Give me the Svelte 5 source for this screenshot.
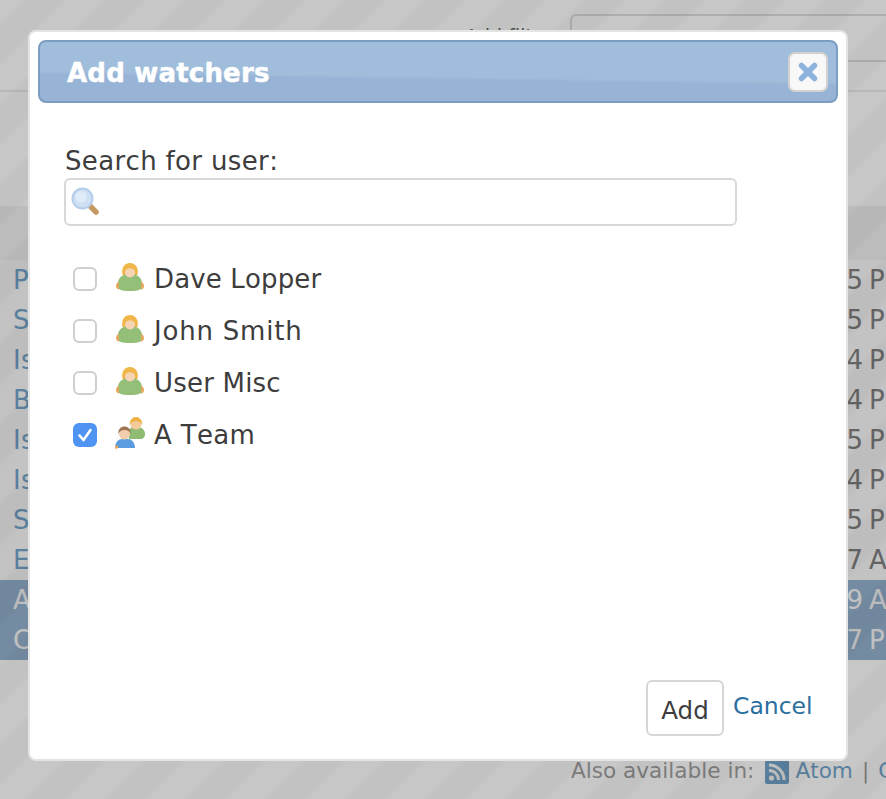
<script>
  const rows = [
    { name: 'Patch', time: '12:45 PM' },
    { name: 'Support', time: '12:45 PM' },
    { name: 'Issue', time: '12:44 PM' },
    { name: 'Bug', time: '12:44 PM' },
    { name: 'Issue', time: '12:45 PM' },
    { name: 'Issue', time: '12:44 PM' },
    { name: 'Support', time: '12:45 PM' },
    { name: 'Error', time: '10:47 AM' },
    { name: 'Attach', time: '10:49 AM', on: true },
    { name: 'Check', time: '12:47 PM', on: true }
  ];
  const users = [
    { name: 'Dave Lopper', group: false, checked: false, ls: 0.15 },
    { name: 'John Smith', group: false, checked: false, ls: 0.8 },
    { name: 'User Misc', group: false, checked: false, ls: 0.2 },
    { name: 'A Team', group: true, checked: true, ls: 0.35 }
  ];
</script>

<div class="page">
  <header class="top">
    <span class="filter-label">Add filter</span>
    <span class="filter-box"></span>
  </header>
  <section class="options"></section>
  <section class="table">
    {#each rows as r}
      <div class="row" class:on={r.on}>
        <span class="subject">{r.name}</span>
        <span class="time">{r.time}</span>
      </div>
    {/each}
  </section>
  <footer class="foot">
    <span>Also available in:</span>
    <svg class="rss" viewBox="0 0 24 24" width="24" height="24">
      <rect width="24" height="24" rx="2" fill="#6f9fc4" />
      <circle cx="6.500" cy="18" r="2.600" fill="#f0f0f0" />
      <path d="M4 10.500a9.500 9.500 0 0 1 9.500 9.500M4 5a15 15 0 0 1 15 15" fill="none" stroke="#f0f0f0" stroke-width="3" />
    </svg>
    <span class="lnk">Atom</span>
    <span>|</span>
    <span class="lnk">CSV</span>
  </footer>
</div>

<div class="shade"></div>

<div class="modal" role="dialog">
  <div class="title">
    <span class="title-text">Add watchers</span>
    <button class="close" aria-label="Close">
      <svg viewBox="0 0 20 20" width="20" height="20">
        <path d="M3.500 3.500 16.500 16.500M16.500 3.500 3.500 16.500" stroke="#8db2dc" stroke-width="5.500" stroke-linecap="round" />
      </svg>
    </button>
  </div>

  <div class="body">
    <label class="search-label" for="q">Search for user:</label>
    <div class="search">
      <svg class="glass" viewBox="0 0 28 28" width="28" height="28">
        <path d="M18 18 25 25" stroke="#c49a62" stroke-width="5.500" stroke-linecap="round" />
        <circle cx="11.500" cy="11.500" r="10" fill="#cfe0f4" stroke="#b4cdea" stroke-width="2" />
        <circle cx="10" cy="10" r="5.500" fill="#e0ebf8" />
      </svg>
      <input id="q" type="text" />
    </div>

    <ul class="users">
      {#each users as u}
        <li>
          <span class="check" class:checked={u.checked}>
            {#if u.checked}
              <svg viewBox="0 0 24 24" width="24" height="24">
                <path d="M6.500 12.500 10.500 17 17.500 7" fill="none" stroke="#fff" stroke-width="2.600" stroke-linecap="round" stroke-linejoin="round" />
              </svg>
            {/if}
          </span>
          {#if u.group}
            <svg class="ico team" viewBox="0 0 32 32" width="32" height="32">
              <path d="M13 15c1-4 4-5 6-5h4c3 0 6 2 7 6 .5 3-1 5-3 6H14Z" fill="#8fbb72" />
              <circle cx="21" cy="7" r="5.500" fill="#f3cb9a" />
              <path d="M15 8c-1-5 3-8 6-8s7 3 6 8c-1-3-3-4-6-4s-5 1-6 4Z" fill="#eeb040" />
              <path d="M0 31c0-6 4-9 7-9h6c3 0 7 3 7 9Z" fill="#5b9be0" />
              <circle cx="1.500" cy="30" r="1.800" fill="#e3a75f" />
              <circle cx="9.500" cy="17" r="5.500" fill="#f1cfae" />
              <path d="M3.500 17c-1-5 3-7.500 6-7.500s7 2.500 6 7.500c-1-3-3-4-6-4s-5 1-6 4Z" fill="#a07450" />
            </svg>
          {:else}
            <svg class="ico" viewBox="0 0 32 32" width="32" height="32">
              <path d="M7.500 13C6 5 10 1 15 1s9 4 7.500 12Z" fill="#f0b648" />
              <path d="M3 20c1-5 5-7 8-8h8c3 1 7 3 8 8 1 3 1 6-1 7-3 2-7 2-11 2s-8 0-11-2c-2-1-2-4-1-7Z" fill="#94bf78" />
              <path d="M4 27.500C0 27 0 21 4 20ZM26 27.500c4-.5 4-6.500 0-7.500Z" fill="#e3a75f" />
              <circle cx="15" cy="10.500" r="5" fill="#f5d5b5" />
              <path d="M9.500 9.500c1.500-2.500 3-3 5.500-3s4 .5 5.500 3C20.500 5 18 3 15 3S9.500 5 9.500 9.500Z" fill="#f0b648" />
            </svg>
          {/if}
          <span class="uname" style="letter-spacing: {u.ls}px">{u.name}</span>
        </li>
      {/each}
    </ul>
  </div>

  <div class="actions">
    <button class="add">Add</button>
    <span class="cancel">Cancel</span>
  </div>
</div>

<style>
  :global(body) {
    margin: 0;
    background: #fff;
    font-family: "DejaVu Sans", Verdana, sans-serif;
    font-kerning: none;
  }
  .page {
    width: 886px;
    height: 799px;
    overflow: hidden;
    font-size: 26px;
    color: #7c7c7c;
    background: #f8f8f8;
    display: flex;
    flex-direction: column;
  }
  .top {
    height: 92px;
    box-sizing: border-box;
    border-bottom: 2px solid #e4e4e4;
    padding: 14px 0 0 465px;
    display: flex;
    gap: 30px;
    flex-shrink: 0;
  }
  .filter-label {
    font-size: 19px;
    line-height: 36px;
    padding-top: 4px;
    width: 75px;
    white-space: nowrap;
    color: #666;
  }
  .filter-box {
    flex: 1;
    height: 48px;
    box-sizing: border-box;
    border: 2px solid #d8d8d8;
    border-right: 0;
    border-radius: 6px 0 0 6px;
  }
  .options {
    height: 114px;
    flex-shrink: 0;
  }
  .table {
    flex-shrink: 0;
    background: #eaeaea;
    padding-top: 54px;
    height: 454px;
    box-sizing: border-box;
  }
  .row {
    height: 40px;
    line-height: 40px;
    display: grid;
    grid-template-columns: 774px auto;
    padding-left: 13px;
    white-space: nowrap;
    overflow: hidden;
    background: #f2f2f2;
    letter-spacing: 0.3px;
    word-spacing: -3px;
  }
  .row.on {
    background: #90adc9;
    color: #f0f0f0;
  }
  .subject {
    color: #6f9fc4;
  }
  .row.on .subject {
    color: #f0f0f0;
  }
  .foot {
    flex: 1;
    background: #f8f8f8;
    padding: 98px 0 0 571px;
    display: flex;
    align-items: flex-start;
    gap: 9px;
    font-size: 21.600px;
    white-space: nowrap;
    color: #9a9a9a;
  }
  .lnk {
    color: #6f9fc4;
  }
  .rss {
    flex-shrink: 0;
    margin-top: 2px;
    margin-left: 2px;
    margin-right: -3px;
  }
  .shade {
    position: absolute;
    inset: 0 auto auto 0;
    width: 886px;
    height: 799px;
    background:
      repeating-linear-gradient(-45deg,
        rgba(0, 0, 0, 0.195) 0 11px,
        rgba(0, 0, 0, 0.22) 17px 40px,
        rgba(0, 0, 0, 0.195) 46px 56.570px);
  }
  .modal {
    position: absolute;
    left: 28px;
    top: 30px;
    width: 820px;
    height: 731px;
    box-sizing: border-box;
    background: #fff;
    border: 2px solid #e4e4e4;
    border-radius: 8px;
    padding: 8px;
    color: #3d3d3d;
    font-size: 26px;
    display: flex;
    flex-direction: column;
  }
  .title {
    height: 63px;
    box-sizing: border-box;
    flex-shrink: 0;
    border: 2px solid #7b9dc1;
    border-radius: 8px;
    background: linear-gradient(180.8deg, #a0bedb 0 57%, #97b3d6 62% 100%);
    color: #fff;
    padding-left: 27px;
    display: flex;
    align-items: center;
    justify-content: space-between;
  }
  .title-text {
    font-weight: 700;
    font-size: 26px;
    letter-spacing: 0.2px;
    -webkit-text-stroke: 0.5px #fff;
    padding-top: 2px;
  }
  .close {
    width: 40px;
    height: 40px;
    margin-right: 8px;
    padding: 0;
    box-sizing: border-box;
    background: #f8f8f8;
    border: 2px solid #d2d2d2;
    border-radius: 7px;
    display: flex;
    align-items: center;
    justify-content: center;
  }
  .close svg {
    filter: blur(0.4px);
  }
  .body {
    padding: 42px 0 0 26px;
    flex: 1;
  }
  .search-label {
    display: block;
    line-height: 32px;
    height: 32px;
    margin-left: 1px;
    letter-spacing: 0.35px;
  }
  .search {
    position: relative;
    width: 673px;
    height: 48px;
    margin-top: 1px;
  }
  .glass {
    position: absolute;
    left: 7px;
    top: 9px;
    filter: blur(0.6px);
  }
  .search input {
    display: block;
    width: 100%;
    height: 100%;
    box-sizing: border-box;
    border: 2px solid #d8d8d8;
    border-radius: 6px;
    background: #fff;
    outline: none;
  }
  .users {
    list-style: none;
    margin: 27px 0 0;
    padding: 0 0 0 9px;
  }
  .users li {
    height: 52px;
    display: flex;
    align-items: center;
  }
  .check {
    width: 24px;
    height: 24px;
    box-sizing: border-box;
    border: 2px solid #cfcfcf;
    border-radius: 6px;
    background: #fff;
    flex-shrink: 0;
    margin-right: 18px;
  }
  .check.checked {
    background: #4f93f3;
    border: 0;
  }
  .check svg {
    display: block;
  }
  .ico {
    flex-shrink: 0;
    filter: blur(0.6px);
    margin-right: 7px;
    margin-top: -2px;
  }
  .ico.team {
    margin-top: -4px;
  }
  .uname {
    white-space: nowrap;
  }
  .actions {
    height: 56px;
    flex-shrink: 0;
    display: flex;
    align-items: flex-start;
    padding: 0 0 15px 608px;
    gap: 9px;
  }
  .add {
    width: 78px;
    height: 56px;
    box-sizing: border-box;
    background: #fff;
    border: 2px solid #d6d6d6;
    border-radius: 6px;
    font-family: inherit;
    font-size: 24.500px;
    color: #3d3d3d;
    padding: 4px 0 0;
  }
  .cancel {
    color: #2a6f9e;
    font-size: 23.500px;
    line-height: 53px;
  }
</style>
